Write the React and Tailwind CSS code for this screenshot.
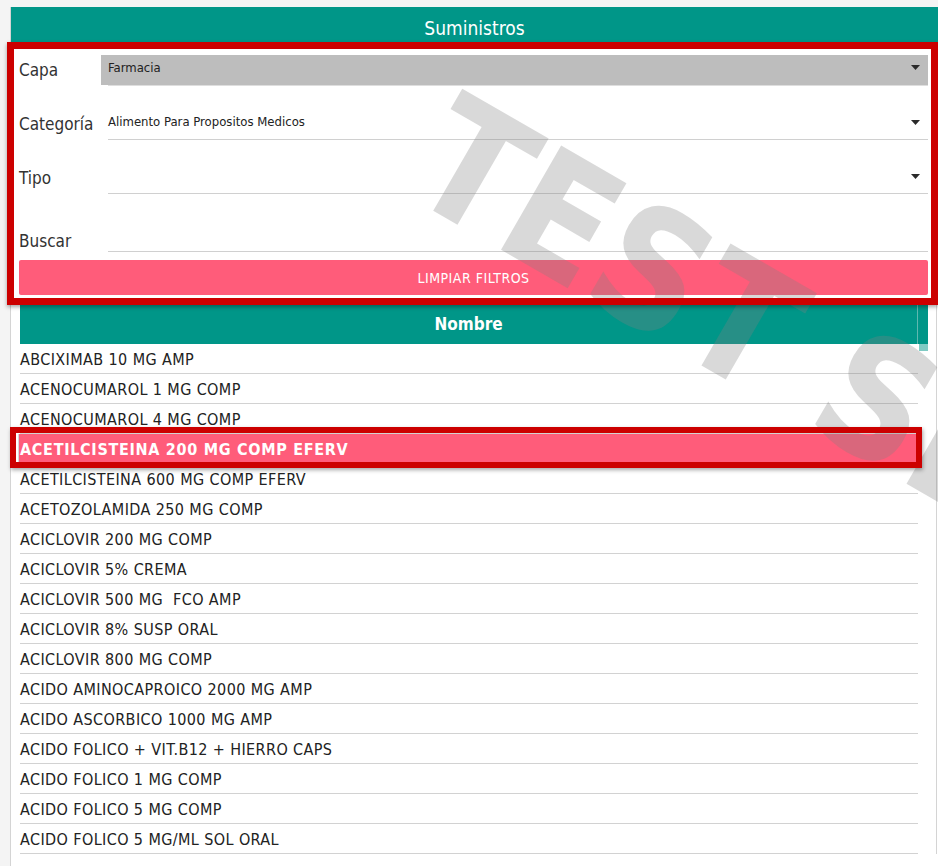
import React from "react";

const items = [
  "ABCIXIMAB 10 MG AMP",
  "ACENOCUMAROL 1 MG COMP",
  "ACENOCUMAROL 4 MG COMP",
  "ACETILCISTEINA 200 MG COMP EFERV",
  "ACETILCISTEINA 600 MG COMP EFERV",
  "ACETOZOLAMIDA 250 MG COMP",
  "ACICLOVIR 200 MG COMP",
  "ACICLOVIR 5% CREMA",
  "ACICLOVIR 500 MG  FCO AMP",
  "ACICLOVIR 8% SUSP ORAL",
  "ACICLOVIR 800 MG COMP",
  "ACIDO AMINOCAPROICO 2000 MG AMP",
  "ACIDO ASCORBICO 1000 MG AMP",
  "ACIDO FOLICO + VIT.B12 + HIERRO CAPS",
  "ACIDO FOLICO 1 MG COMP",
  "ACIDO FOLICO 5 MG COMP",
  "ACIDO FOLICO 5 MG/ML SOL ORAL",
];

function Caret() {
  return (
    <svg width="9" height="5" viewBox="0 0 9 5" className="shrink-0">
      <path d="M0 0 H9 L4.5 5 Z" fill="#2a2a2a" />
    </svg>
  );
}

export default function App() {
  return (
    <div className="relative min-h-screen overflow-hidden bg-[#f4f4f4] pt-[7px] pl-[10px] font-['DejaVu_Sans_Condensed','DejaVu_Sans',sans-serif] font-stretch-condensed text-[#222]">
      <div className="h-[859px] w-[928px] border-l border-[#d4d4d4] bg-white">
        {/* Header */}
        <div className="flex h-[40px] items-center justify-center bg-[#009688] pt-[3px] text-[19px] text-white">
          Suministros
        </div>

        {/* Filters */}
        <div className="pl-[8px] pr-[10px] pt-[8px] pb-[10px]">
          {/* Capa */}
          <div className="flex h-[31px] items-center">
            <div className="w-[82px] pt-[1px] text-[17px] text-[#333]">Capa</div>
            <div className="flex h-[31px] flex-1 flex-col">
              <div className="flex h-[30px] items-center justify-between bg-[#bdbdbd] pb-[5px] pl-[7px] pr-[8px] text-[13px] text-[#222]">
                <span>Farmacia</span>
                <Caret />
              </div>
              <div className="ml-[7px] h-[1px] bg-[#dedede]" />
            </div>
          </div>

          {/* Categoría */}
          <div className="mt-[23px] flex h-[31px] items-center">
            <div className="w-[82px] pt-[1px] text-[17px] text-[#333]">Categoría</div>
            <div className="ml-[7px] flex h-[31px] flex-1 items-center justify-between border-b border-[#d0d0d0] pb-[4px] pr-[8px] text-[13px] text-[#222]">
              <span>Alimento Para Propositos Medicos</span>
              <Caret />
            </div>
          </div>

          {/* Tipo */}
          <div className="mt-[23px] flex h-[31px] items-center">
            <div className="w-[82px] pt-[1px] text-[17px] text-[#333]">Tipo</div>
            <div className="ml-[7px] flex h-[31px] flex-1 items-center justify-end border-b border-[#d0d0d0] pb-[4px] pr-[8px]">
              <Caret />
            </div>
          </div>

          {/* Buscar */}
          <div className="mt-[27px] flex h-[31px] items-end">
            <div className="mb-[1px] w-[82px] text-[17px] leading-[20px] text-[#333]">Buscar</div>
            <div className="ml-[7px] h-[31px] flex-1 border-b border-[#d0d0d0]" />
          </div>

          {/* Button */}
          <div className="mt-[8px] flex h-[35px] items-center justify-center rounded-[2px] bg-[#ff5c7a] pt-[1px] text-[14px] tracking-[0.5px] text-white">
            LIMPIAR FILTROS
          </div>
        </div>

        {/* Table */}
        <div className="mr-[1px] border-r border-[#d4d4d4] pl-[9px] pr-[8px]">
          <div className="flex h-[39px] bg-[#009688]">
            <div className="flex flex-1 items-center justify-center border-r border-[#5fb8b0] pt-[1px] text-[17px] font-bold text-white">
              Nombre
            </div>
            <div className="w-[10px]" />
          </div>
          <div className="flex">
            <div className="flex-1">
              {items.map((it, i) => {
                const sel = i === 3;
                return (
                  <div
                    key={i}
                    className={
                      sel
                        ? "-ml-[2px] flex h-[30px] items-center border-b border-l border-b-[#ff5c7a] border-l-[#d8d8d8] bg-[#ff5c7a] pl-[1px] pt-[2px] text-[16px] font-bold tracking-[0.7px] text-white"
                        : "flex h-[30px] items-center border-b border-[#d2d2d2] pt-[2px] text-[16px] tracking-[0.4px] text-[#222]"
                    }
                  >
                    <span className="whitespace-pre">{it}</span>
                  </div>
                );
              })}
            </div>
            <div className="w-[10px]">
              <div className="ml-[1px] h-[7px] bg-[#80cbc4]" />
            </div>
          </div>
        </div>
      </div>

      {/* Watermark */}
      <div className="pointer-events-none absolute left-[471px] top-[72px] origin-top-left rotate-[30deg] whitespace-nowrap font-['DejaVu_Sans_Condensed','DejaVu_Sans',sans-serif] font-stretch-condensed text-[165px] font-bold leading-none text-[rgba(128,128,128,0.3)]">
        TEST SERVER
      </div>

      {/* Annotation boxes */}
      <div className="pointer-events-none absolute left-[7px] top-[42px] h-[263px] w-[931px] border-[7px] border-[#cc0000] shadow-[0_2px_4px_rgba(0,0,0,0.35)]" />
      <div className="pointer-events-none absolute left-[10px] top-[427px] h-[41px] w-[912px] border-[6px] border-[#cc0000] shadow-[1px_2px_4px_rgba(0,0,0,0.35)]" />
    </div>
  );
}
